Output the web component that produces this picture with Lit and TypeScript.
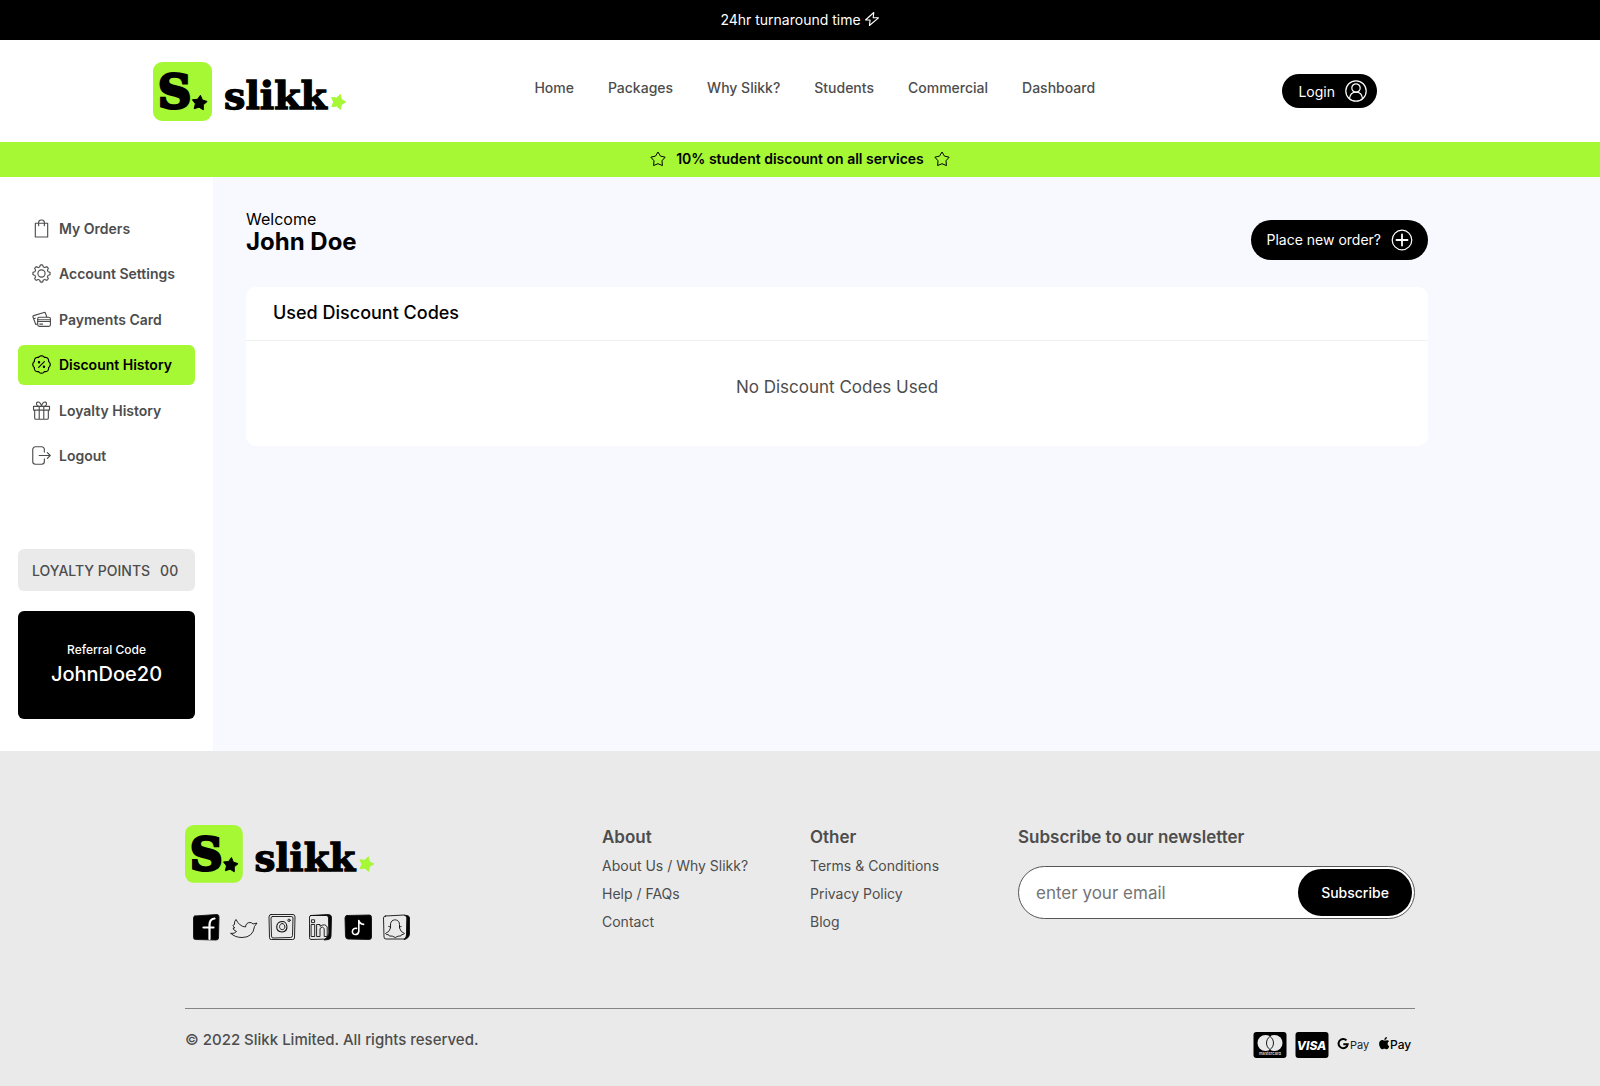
import { LitElement, html, css, svg } from "lit";
import { customElement, property } from "lit/decorators.js";
import { classMap } from "lit/directives/class-map.js";

/** Closed polar outline with a radius per step, used for star, gear and badge shapes. */
function polar(cx: number, cy: number, steps: number, radius: (i: number) => number, offset = 0): string {
  let d = "";
  for (let i = 0; i < steps; i++) {
    const a = (i / steps) * Math.PI * 2 + offset;
    const r = radius(i);
    d += `${i ? "L" : "M"}${(cx + r * Math.cos(a)).toFixed(2)} ${(cy + r * Math.sin(a)).toFixed(2)}`;
  }
  return d + "Z";
}

const star = (cx: number, cy: number, outer: number, inner: number, tilt = 0) =>
  polar(cx, cy, 10, (i) => (i % 2 ? inner : outer), -Math.PI / 2 + tilt);

const gearPath = polar(10, 10, 96, (i) => {
  const w = Math.cos((i / 96) * Math.PI * 16);
  return 8.1 + 0.95 * Math.max(-1, Math.min(1, w * 2.2));
}, -Math.PI / 2);

const scallopPath = polar(10, 10, 96, (i) => 8.1 + 1.1 * Math.abs(Math.cos((i / 96) * Math.PI * 8)), -Math.PI / 2);

const glyphs = {
  bag: svg`<path d="M3.5 4.5h13v14.5h-13z"/><path d="M7 7V3.4a2.6 2.6 0 0 1 2.6-2.4h.8A2.6 2.6 0 0 1 13 3.4V7"/>`,
  gear: svg`<path d=${gearPath}/><circle cx="10" cy="10" r="3.8"/>`,
  cards: svg`<rect x="6" y="7.6" width="13.4" height="9.6" rx="1.6"/><path d="M6 10.3h13.4M6 12.1h13.4M8.2 14.8h3"/><path d="M5.8 14.8 4 15.2 1 7.4c-.2-.8 0-1.2.8-1.5L12.6 2.6c.8-.2 1.3 0 1.6.8l1.4 4M1.6 9.2 3.4 8.6"/>`,
  discount: svg`<path d=${scallopPath}/><path d="m7 13 6-6"/><circle cx="7.4" cy="7.6" r=".7"/><circle cx="12.6" cy="12.4" r=".7"/>`,
  gift: svg`<path d="M1.6 5.6h16.8v4H1.6zM2.8 9.6h14.4v8.2a1.4 1.4 0 0 1-1.4 1.4H4.2a1.4 1.4 0 0 1-1.4-1.4zM7.6 5.6v13.6M12.4 5.6v13.6"/><path d="M10 5.4C9 2 7.4.6 5.8 1.2 3.8 2 4.6 5 7 5.5M10 5.4C11 2 12.6.6 14.2 1.2 16.2 2 15.4 5 13 5.5"/>`,
  logout: svg`<path d="M13 6.4V3.6A2.8 2.8 0 0 0 10.2.8H3.6A2.8 2.8 0 0 0 .8 3.6v12.8a2.8 2.8 0 0 0 2.8 2.8h6.6a2.8 2.8 0 0 0 2.8-2.8V13.6M7.5 10h11.6M16.2 7l3 3-3 3"/>`,
};

type GlyphName = keyof typeof glyphs;

@customElement("slikk-logo")
export class SlikkLogo extends LitElement {
  static styles = css`
    :host { display: block; }
    .mark { display: block; width: 100%; height: auto; }
    .word { font-family: "DejaVu Serif", "Liberation Serif", serif; font-weight: 700; fill: #000; stroke: #000; }
    .star { stroke-width: 1; stroke-linejoin: round; }
    .dark { fill: #000; stroke: #000; }
    .lime { fill: #a6f734; stroke: #a6f734; }
  `;
  render() {
    return html`
      <svg class="mark" viewBox="0 0 194 60" role="img" aria-label="slikk">
        <rect x="0" y="1" width="59" height="59" rx="9" fill="#a6f734" />
        <text class="word" x="5" y="47" font-size="46" stroke-width="3">S</text>
        <path class="star dark" d=${star(46.5, 42, 7.8, 4.2, 0.12)} />
        <text class="word" x="71" y="48" font-size="38" stroke-width="1.300">slikk</text>
        <path class="star lime" d=${star(185, 41, 7.8, 4.2, 0.3)} />
      </svg>
    `;
  }
}

@customElement("side-menu")
export class SideMenu extends LitElement {
  @property() active = "Discount History";

  private items: { label: string; icon: GlyphName }[] = [
    { label: "My Orders", icon: "bag" },
    { label: "Account Settings", icon: "gear" },
    { label: "Payments Card", icon: "cards" },
    { label: "Discount History", icon: "discount" },
    { label: "Loyalty History", icon: "gift" },
    { label: "Logout", icon: "logout" },
  ];

  static styles = css`
    :host { display: flex; flex-direction: column; padding: 31px 18px 32px; background: #fff; }
    .menu { list-style: none; margin: 0 0 73px; padding: 0; min-height: 268px; display: flex; flex-direction: column; justify-content: space-between; }
    .link { display: flex; align-items: center; gap: 8px; height: 40px; padding: 0 14px; border-radius: 6px; color: #4d4d4d; font-size: 14px; font-weight: 600; text-decoration: none; white-space: nowrap; }
    .link.active { background: #a6f734; color: #000; }
    .icon { width: 19px; height: 19px; flex: none; fill: none; stroke: currentColor; stroke-width: 1.2; stroke-linejoin: round; stroke-linecap: round; }
    .points { display: flex; align-items: center; gap: 10px; height: 42px; padding: 0 14px; border-radius: 6px; background: #eaeaea; color: #4d4d4d; font-size: 14px; font-weight: 500; white-space: nowrap; }
    .referral { display: flex; flex-direction: column; align-items: center; justify-content: center; margin-top: 20px; height: 104px; padding-bottom: 4px; border-radius: 6px; background: #000; color: #fff; }
    .caption { font-size: 12px; line-height: 22px; font-weight: 500; }
    .code { font-size: 20px; line-height: 26px; font-weight: 500; }
  `;

  render() {
    return html`
      <nav aria-label="Account">
        <ul class="menu">
          ${this.items.map(
            (item) => html`<li>
              <a href="#" class=${classMap({ link: true, active: item.label === this.active })}>
                <svg class="icon" viewBox="0 0 20 20" aria-hidden="true">${glyphs[item.icon]}</svg>
                <span>${item.label}</span>
              </a>
            </li>`
          )}
        </ul>
      </nav>
      <div class="points"><span>LOYALTY POINTS</span><span>00</span></div>
      <div class="referral"><span class="caption">Referral Code</span><span class="code">JohnDoe20</span></div>
    `;
  }
}

@customElement("site-footer")
export class SiteFooter extends LitElement {
  static styles = css`
    :host { display: block; background: #eaeaea; color: #4d4d4d; }
    .inner { max-width: 1230px; margin: 0 auto; padding: 73px 20px 27px; }
    .columns { display: grid; grid-template-columns: 417px 208px 208px minmax(0, 1fr); min-height: 184px; border-bottom: 1px solid #858585; }
    .logo { width: 190px; }
    .social { display: flex; gap: 10px; margin: 30px 0 0; padding: 0 0 0 7px; list-style: none; }
    .social-link { display: block; color: #000; }
    .social-icon { display: block; width: 28px; height: 28px; fill: none; stroke: #111; stroke-width: 0.9; stroke-linejoin: round; stroke-linecap: round; }
    .heading { margin: 0; font-size: 17px; line-height: 26px; font-weight: 600; }
    .links { display: flex; flex-direction: column; gap: 8px; margin: 6px 0 0; padding: 0; list-style: none; }
    .links a { display: block; color: inherit; font-size: 14px; line-height: 20px; text-decoration: none; white-space: nowrap; }
    .form { display: flex; align-items: stretch; margin-top: 16px; height: 47px; padding: 2px; border: 1px solid #555; border-radius: 27px; background: #fff; }
    .email { flex: 1; min-width: 0; border: 0; outline: 0; padding: 0 15px; background: transparent; font: inherit; font-size: 17px; color: #4d4d4d; }
    .email::placeholder { color: #757575; opacity: 1; }
    .submit { width: 114px; border: 0; border-radius: 24px; background: #000; color: #fff; font: inherit; font-size: 14px; font-weight: 500; }
    .bottom { display: flex; justify-content: space-between; align-items: flex-start; padding-top: 20px; }
    .copy { margin: 0; font-size: 15px; line-height: 22px; font-weight: 500; }
    .pay { display: flex; gap: 8px; margin: 2px 2px 0 0; }
    .pay-icon { display: block; height: 28px; width: 34px; }
    .pay-text { font-family: Inter, "Liberation Sans", sans-serif; }
  `;

  private social = [
    { name: "Facebook", art: svg`<path d="M3 3 25 1.500Q27 1.500 27 4L26.500 25Q26.500 27 24 27L3.500 26.500Q1.500 26.500 1.500 24.500V5Q1.500 3 3 3Z" fill="#000"/><path d="M17.500 26V12q0-6 5-6.500M11.500 14.500h10" stroke="#fff" stroke-width="2.200"/>` },
    { name: "Twitter", art: svg`<path d="M1 20.500Q4.500 21 6.500 18.500 3.500 17.500 3 15L4.800 14.800Q1.500 12 4.500 11.500 4 8.500 6 6.500 9.500 13.500 15.500 14 16 9.500 20 9.500 22 9.500 23 11L27 10 24.500 13.500Q23 24.500 12 24.500 5 24.500 1 20.500Z"/>` },
    { name: "Instagram", art: svg`<path d="M3 1.500H25Q27 1.500 27 4L26.500 25Q26.500 26.500 24.500 26.500H3.500Q1.500 27 1.500 24.500L1 4Q1 1.500 3 1.500Z"/><path d="M4.500 3.500h19q1.500 0 1.500 1.500l-.5 17.500q0 2-2 2L5 25q-1.500 0-1.500-2L3 5q0-1.500 1.500-1.500Z"/><path d="M14 8.500c5.500-.5 7.500 9.500 0 10.500-7.500-.5-6.500-10 0-10.500Z" stroke-width="1.100"/><path d="M14.200 10.500c3.400 0 3.800 6 0 6.200-3.800-.3-3.400-6 0-6.200Z"/><circle cx="21" cy="7.300" r="1.200"/>` },
    { name: "LinkedIn", art: svg`<path d="M5 2.500 22.500 1.500Q25 1.500 25.500 4L25 23Q25 26 22.500 26.500L18 27Q22.500 24 22.800 20L22.500 5Q22.500 3 21 2.500Z" fill="#000"/><path d="M5 2.500 22 2.500Q24 2.500 24 5L24 24Q24 26 22 26L5 26.500Q3.500 26.500 3.500 24.500V4Q3.500 2.500 5 2.500Z"/><path d="M5.500 11.500h3.200v12h-3.200zM5.800 6.800h2.800v2.800h-2.800zM11 11.500h3v1.800q5.200-3.300 7.200.7V23.500h-3v-8q-1.600-3-4.200 0V23.500h-3z"/>` },
    { name: "TikTok", art: svg`<path d="M3 2.500 25.500 2Q27.500 2 27.500 4.500V24Q27.500 26.500 25 26.500L4 26Q2 26 1.500 23.500L1 5Q1 2.500 3 2.500Z" fill="#000"/><path d="M14.800 7.500V18.500c-.8 4.300-6.600 3.800-6.400 0 .2-2.300 2.100-3.500 4.100-3.100M14.800 7.500q1 3.500 4.800 3.900" stroke="#fff" stroke-width="1.600"/>` },
    { name: "Snapchat", art: svg`<path d="M23 2.500Q27.500 2 27.500 5V21Q27 25.500 22 26.500 24.500 24 24.500 22L25 5Q25 3 23 2.500Z" fill="#000"/><path d="M3.500 3 22.500 2Q25 2 25 4.500L24.500 24Q24.500 26 22.500 26L4 26Q2 26 2 24L1.500 5Q1.500 3 3.500 3Z"/><path d="M8.500 11.500c-.5-6 9-6.500 9 0v2.500l1.700-.5M8.700 14l-2-.5M8.500 11.500v3.500q-1 4-5 5.500.5 1.500 3 1.200l.8 1.300q3-.5 6 1.500 3-2 5.500-1.500l.7-1.300q2 0 3-1.200-4-1.500-5-5.500v-2"/>` },
  ];

  private linkColumn(title: string, links: string[]) {
    return html`<section>
      <h2 class="heading">${title}</h2>
      <ul class="links">${links.map((l) => html`<li><a href="#">${l}</a></li>`)}</ul>
    </section>`;
  }

  render() {
    return html`
      <div class="inner">
        <div class="columns">
          <div>
            <slikk-logo class="logo"></slikk-logo>
            <ul class="social">
              ${this.social.map(
                (s) => html`<li><a class="social-link" href="#" aria-label=${s.name}>
                  <svg class="social-icon" viewBox="0 0 28 28" aria-hidden="true">${s.art}</svg>
                </a></li>`
              )}
            </ul>
          </div>
          ${this.linkColumn("About", ["About Us / Why Slikk?", "Help / FAQs", "Contact"])}
          ${this.linkColumn("Other", ["Terms & Conditions", "Privacy Policy", "Blog"])}
          <section>
            <h2 class="heading"><label for="email">Subscribe to our newsletter</label></h2>
            <form class="form" @submit=${(e: Event) => e.preventDefault()}>
              <input class="email" id="email" type="email" placeholder="enter your email" />
              <button class="submit" type="submit">Subscribe</button>
            </form>
          </section>
        </div>
        <div class="bottom">
          <p class="copy">© 2022 Slikk Limited. All rights reserved.</p>
          <div class="pay">
            <svg class="pay-icon" viewBox="0 0 34 28" role="img" aria-label="Mastercard">
              <rect x="0.500" y="1" width="33" height="26" rx="3" fill="#000" />
              <circle cx="12.500" cy="12" r="8" fill="#eaeaea" />
              <circle cx="21.500" cy="12" r="8" fill="#eaeaea" />
              <path d="M17 5.400a8 8 0 0 1 0 13.200 8 8 0 0 1 0-13.200Z" fill="#eaeaea" stroke="#000" stroke-width="0.900" />
              <text class="pay-text" x="17" y="24" text-anchor="middle" font-size="4" font-weight="600" fill="#ddd">mastercard</text>
            </svg>
            <svg class="pay-icon" viewBox="0 0 34 28" role="img" aria-label="Visa">
              <rect x="0.500" y="1" width="33" height="26" rx="3" fill="#000" />
              <text class="pay-text" x="16.500" y="18.500" text-anchor="middle" font-size="12" font-weight="800" font-style="italic" fill="#fff">VISA</text>
            </svg>
            <svg class="pay-icon" viewBox="0 0 34 28" role="img" aria-label="Google Pay">
              <path d="M9.500 9.400A4.600 4.600 0 1 0 10.700 13.300H6.300" fill="none" stroke="#000" stroke-width="2" />
              <text class="pay-text" x="13" y="17.500" font-size="11" fill="#222">Pay</text>
            </svg>
            <svg class="pay-icon" viewBox="0 0 34 28" role="img" aria-label="Apple Pay">
              <path d="M5.600 9.600C4.400 9.600 3.900 9 2.900 9.100.8 9.400-.2 11.400.2 13.900.6 16 1.900 18.200 3.300 18.200c.8 0 1.200-.5 2.200-.5s1.300.5 2.200.5c1.300 0 2.200-1.900 2.600-3-2.200-1-2.200-3.900-.2-4.900C8.800 8.400 7 9.500 5.600 9.600ZM5.400 8.900C5.300 7.300 6.500 6.200 7.900 6 8 7.700 6.900 8.900 5.400 8.900Z" fill="#000" />
              <text class="pay-text" x="11" y="18" font-size="12" font-weight="500" fill="#000">Pay</text>
            </svg>
          </div>
        </div>
      </div>
    `;
  }
}

@customElement("app-root")
export class AppRoot extends LitElement {
  static styles = css`
    :host { display: flex; flex-direction: column; min-height: 100vh; font-family: Inter, "Noto Sans", "Liberation Sans", sans-serif; color: #000; background: #fff; }
    .promo { display: flex; align-items: center; justify-content: center; gap: 3px; height: 38px; padding-bottom: 2px; background: #000; color: #fff; font-size: 14px; font-weight: 400; }
    .bolt { width: 16px; height: 16px; fill: none; stroke: #fff; stroke-width: 1.1; stroke-linejoin: round; }
    .header { display: flex; align-items: center; justify-content: space-between; height: 102px; padding: 0 223px 0 153px; }
    .logo { width: 194px; flex: none; }
    .nav { display: flex; gap: 34px; padding-bottom: 8px; }
    .nav a { color: #4d4d4d; font-size: 14px; font-weight: 500; text-decoration: none; white-space: nowrap; }
    .pill { display: flex; align-items: center; border: 0; border-radius: 20px; background: #000; color: #fff; font: inherit; font-size: 14px; font-weight: 400; white-space: nowrap; padding: 0 10px 0 16px; gap: 10px; height: 34px; }
    .pill.large { height: 40px; padding: 0 15px 0 16px; }
    .pill-icon { width: 22px; height: 22px; fill: none; stroke: #fff; stroke-width: 1.2; stroke-linecap: round; }
    .banner { display: flex; align-items: center; justify-content: center; gap: 10px; height: 33px; padding-bottom: 2px; background: #a6f734; font-size: 14px; font-weight: 600; }
    .star { width: 16px; height: 16px; fill: none; stroke: #000; stroke-width: 1; stroke-linejoin: round; }
    .body { flex: 1; display: grid; grid-template-columns: 213px 1fr; background: #f8f9ff; }
    .content { padding: 32px 33px; max-width: 1182px; }
    .welcome { display: flex; align-items: flex-start; justify-content: space-between; min-height: 61px; }
    .welcome .pill { align-self: center; }
    .greeting { margin: 0; font-size: 16px; line-height: 20px; }
    .name { margin: 0; font-size: 24px; line-height: 26px; font-weight: 700; }
    .card { margin-top: 17px; border-radius: 10px; background: #fff; }
    .card-title { margin: 0; padding: 13px 27px 14px; border-bottom: 1px solid #eff0f2; font-size: 18px; line-height: 26px; font-weight: 500; }
    .empty { margin: 0; padding: 33px 27px 46px; color: #4d4d4d; font-size: 17px; line-height: 26px; text-align: center; }
  `;

  private nav = ["Home", "Packages", "Why Slikk?", "Students", "Commercial", "Dashboard"];

  private outlineStar() {
    return html`<svg class="star" viewBox="0 0 16 16" aria-hidden="true"><path d=${star(8, 8.5, 7.5, 4.2)} /></svg>`;
  }

  render() {
    return html`
      <div class="promo">
        <span>24hr turnaround time</span>
        <svg class="bolt" viewBox="0 0 16 16" aria-hidden="true"><path d="M9.800 1.500 1.500 9h4.600L5.400 14.500 14.500 6.800H9.200Z" /></svg>
      </div>
      <header class="header">
        <slikk-logo class="logo"></slikk-logo>
        <nav class="nav" aria-label="Main">${this.nav.map((n) => html`<a href="#">${n}</a>`)}</nav>
        <button class="pill" type="button">
          Login
          <svg class="pill-icon" viewBox="0 0 22 22" aria-hidden="true">
            <circle cx="11" cy="11" r="10.200" /><circle cx="11" cy="8" r="4.200" />
            <path d="M4.500 18.500c.5-4 3-6.300 6.500-6.300s6 2.300 6.500 6.300" />
          </svg>
        </button>
      </header>
      <div class="banner">${this.outlineStar()}<span>10% student discount on all services</span>${this.outlineStar()}</div>
      <div class="body">
        <side-menu></side-menu>
        <main class="content">
          <div class="welcome">
            <div>
              <p class="greeting">Welcome</p>
              <h1 class="name">John Doe</h1>
            </div>
            <button class="pill large" type="button">
              Place new order?
              <svg class="pill-icon" viewBox="0 0 22 22" aria-hidden="true"><circle cx="11" cy="11" r="9.800" /><path d="M11 5.500v11M5.500 11h11" stroke-width="1.800" /></svg>
            </button>
          </div>
          <section class="card">
            <h2 class="card-title">Used Discount Codes</h2>
            <p class="empty">No Discount Codes Used</p>
          </section>
        </main>
      </div>
      <site-footer></site-footer>
    `;
  }
}
